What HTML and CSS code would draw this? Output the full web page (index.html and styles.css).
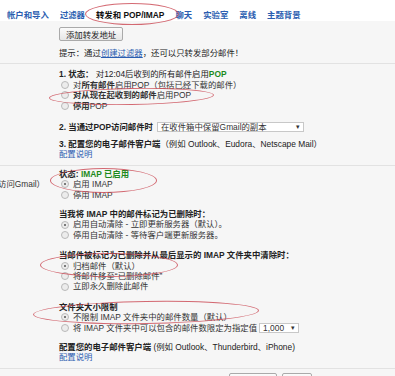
FILE: index.html
```html
<!DOCTYPE html>
<html lang="zh-CN">
<head>
    <meta charset="UTF-8">
    <meta name="viewport" content="width=device-width, initial-scale=1.0">
    <title>转发和 POP/IMAP</title>
    <link rel="stylesheet" href="styles.css">
</head>
<body>

    <!-- 设置标签 -->
    <div class="tabs">
        <a href="#">帐户和导入</a>
        <a href="#">过滤器</a>
        <span class="current">转发和 POP/IMAP</span>
        <a href="#">聊天</a>
        <a href="#">实验室</a>
        <a href="#">离线</a>
        <a href="#">主题背景</a>
    </div>

    <!-- 转发 -->
    <div class="section forward">
        <div class="side"></div>
        <div class="main">
            <button class="btn">添加转发地址</button>
            <p class="hint">提示：通过<a href="#" class="ul">创建过滤器</a>，还可以只转发部分邮件！</p>
        </div>
    </div>

    <!-- POP -->
    <div class="section pop">
        <div class="side"></div>
        <div class="main">
            <p class="line"><b>1. 状态：</b> 对12:04后收到的所有邮件启用<b class="green">POP</b></p>
            <label class="opt"><span class="radio"></span>对<b>所有邮件</b>启用POP（包括已经下载的邮件）</label>
            <label class="opt"><span class="radio"></span><b>对从现在起收到的邮件</b>启用POP</label>
            <label class="opt"><span class="radio"></span><b>停用</b>POP</label>

            <div class="line with-select gap-l">
                <b>2. 当通过POP访问邮件时</b>
                <span class="select wide">在收件箱中保留Gmail的副本<i>▾</i></span>
            </div>

            <p class="line gap-s"><b>3. 配置您的电子邮件客户端</b>（例如 Outlook、Eudora、Netscape Mail）</p>
            <p class="line"><a href="#">配置说明</a></p>
        </div>
    </div>

    <!-- IMAP -->
    <div class="section imap">
        <div class="side">
            <div class="side-text">
                <div class="side-title">IMAP 访问：</div>
                <div class="side-note">(通过 IMAP 从其他客户端访问Gmail）</div>
            </div>
        </div>
        <div class="main">
            <p class="line"><b>状态: <span class="green">IMAP 已启用</span></b></p>
            <label class="opt"><span class="radio on"></span>启用 IMAP</label>
            <label class="opt"><span class="radio"></span>停用 IMAP</label>

            <p class="line gap-m"><b>当我将 IMAP 中的邮件标记为已删除时：</b></p>
            <label class="opt"><span class="radio on"></span>启用自动清除 - 立即更新服务器（默认）。</label>
            <label class="opt"><span class="radio"></span>停用自动清除 - 等待客户端更新服务器。</label>

            <p class="line gap-l"><b>当邮件被标记为已删除并从最后显示的 IMAP 文件夹中清除时：</b></p>
            <label class="opt"><span class="radio on"></span>归档邮件（默认）</label>
            <label class="opt"><span class="radio"></span>将邮件移至“已删除邮件”</label>
            <label class="opt"><span class="radio"></span>立即永久删除此邮件</label>

            <p class="line gap-l"><b>文件夹大小限制</b></p>
            <label class="opt"><span class="radio on"></span>不限制 IMAP 文件夹中的邮件数量（默认）</label>
            <label class="opt"><span class="radio"></span>将 IMAP 文件夹中可以包含的邮件数限定为指定值
                <span class="select small">1,000<i>▾</i></span></label>

            <p class="line gap-m"><b>配置您的电子邮件客户端</b> (例如 Outlook、Thunderbird、iPhone)</p>
            <p class="line"><a href="#">配置说明</a></p>
        </div>
    </div>

    <div class="actions">
        <button class="btn">保存更改</button>
        <button class="btn">取消</button>
    </div>

    <!-- 红色标注圈 -->
    <div class="ring ring-tab"></div>
    <div class="ring ring-pop"></div>
    <div class="ring ring-imap"></div>
    <div class="ring ring-archive"></div>
    <div class="ring ring-size"></div>

</body>
</html>
```

FILE: styles.css
```css
body {
    margin: 0;
    padding: 0;
    background-color: #f6f6f6;
    color: #222;
    font-family: 'Liberation Sans', 'Noto Sans CJK SC', sans-serif;
    font-size: 8.4px;
    line-height: 10.4px;
    position: relative;
    overflow: hidden;
}

a {
    color: #2a5db0;
    text-decoration: none;
}

a.ul {
    text-decoration: underline;
}

p {
    margin: 0;
}

b {
    font-weight: bold;
}

.green {
    color: #1c8a1c;
}

/* 标签 */
.tabs {
    height: 21px;
    box-sizing: border-box;
    padding: 9px 0 0 7px;
    background-color: #fff;
    border-bottom: 1px solid #fff;
    display: flex;
    gap: 11px;
    font-weight: bold;
    line-height: 12px;
}

.tabs a {
    color: #2a5db0;
}

.tabs .current {
    color: #111;
}

/* 分区 */
.section {
    display: flex;
    border-bottom: 1px solid #e2e2e2;
}

.side {
    width: 59px;
    flex-shrink: 0;
    overflow: hidden;
}

.side-text {
    width: 200px;
    margin-left: -155px;
    white-space: nowrap;
    color: #333;
}

.side-title {
    font-weight: bold;
    text-align: left;
}

.side-note {
    text-align: right;
}

.main {
    flex: 1;
    white-space: nowrap;
}

.forward .main {
    padding: 6px 0 5px;
}

.pop .main {
    padding: 5px 0 5px;
}

.imap .main {
    padding: 3px 0 5px;
}

.imap .side-text {
    padding-top: 3px;
}

.btn {
    height: 14px;
    padding: 0 6px;
    font-family: inherit;
    font-size: 8.4px;
    color: #222;
    background: linear-gradient(#fbfbfb, #e6e6e6);
    border: 1px solid #aaa;
    border-radius: 2px;
}

.hint {
    margin-top: 7px;
}

.line {
    display: block;
}

.gap-s {
    margin-top: 6px;
}

.gap-m {
    margin-top: 9px;
}

.gap-l {
    margin-top: 10px;
}

.opt {
    display: flex;
    align-items: center;
    height: 10.4px;
    padding-left: 2px;
    color: #333;
}

.radio {
    width: 6px;
    height: 6px;
    border: 1px solid #b9b9b9;
    border-radius: 50%;
    background-color: #ececec;
    margin-right: 4px;
    position: relative;
    flex-shrink: 0;
}

.radio.on::after {
    content: "";
    position: absolute;
    left: 2px;
    top: 2px;
    width: 2px;
    height: 2px;
    border-radius: 50%;
    background-color: #555;
}

.with-select {
    display: flex;
    align-items: center;
    height: 12px;
}

.select {
    display: inline-flex;
    align-items: center;
    justify-content: space-between;
    height: 10px;
    box-sizing: border-box;
    padding: 0 3px;
    margin-left: 4px;
    background-color: #fff;
    border: 1px solid #c8c8c8;
    font-weight: normal;
    color: #333;
}

.select i {
    font-style: normal;
    font-size: 7px;
    margin-left: 6px;
}

.select.wide {
    width: 147px;
}

.select.small {
    width: 40px;
    margin-left: 2px;
}

.actions {
    padding: 4px 0 0 229px;
    display: flex;
    gap: 5px;
}

/* 标注圈 */
.ring {
    position: absolute;
    border: 1px solid rgba(205, 80, 90, 0.85);
    border-radius: 50%;
    pointer-events: none;
}

.ring-tab {
    left: 85px;
    top: 3px;
    width: 92px;
    height: 20px;
}

.ring-pop {
    left: 49px;
    top: 88px;
    width: 163px;
    height: 15px;
    transform: rotate(-1deg);
}

.ring-imap {
    left: 50px;
    top: 168px;
    width: 105px;
    height: 23px;
}

.ring-archive {
    left: 40px;
    top: 253px;
    width: 136px;
    height: 22px;
}

.ring-size {
    left: 33px;
    top: 301px;
    width: 224px;
    height: 21px;
    transform: rotate(-1deg);
}
```
